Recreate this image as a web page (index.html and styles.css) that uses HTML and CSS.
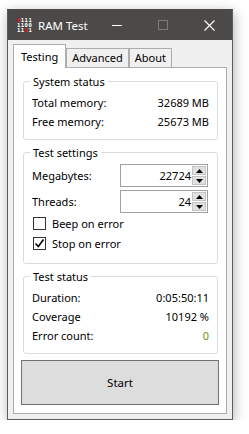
FILE: index.html
```html
<!DOCTYPE html>
<html>
<head>
  <title>RAM Test</title>
  <link rel="stylesheet" href="styles.css">
</head>
<body>
  <div class="window">
    <div class="titlebar">
      <svg class="app-icon" width="16" height="15" viewBox="0 0 16 15">
        <text><tspan class="red" x="0" y="4.4">0</tspan><tspan x="3.8 7.6 11.4" y="4.4">111</tspan><tspan x="0 3.8 7.6 11.4" y="9.4">1100</tspan><tspan x="0 3.8" y="14.4">11</tspan><tspan class="red" x="7.6" y="14.4">0</tspan><tspan x="11.4" y="14.4">1</tspan></text>
      </svg>
      <span class="title">RAM Test</span>
      <div class="caption-btns">
        <span class="cap-btn">
          <svg width="10" height="10" viewBox="0 0 10 10"><path d="M0 5.5h10" stroke="#fff" stroke-width="1"/></svg>
        </span>
        <span class="cap-btn">
          <svg width="10" height="10" viewBox="0 0 10 10"><rect x="0.5" y="0.5" width="9" height="9" fill="none" stroke="#7c7b79" stroke-width="1"/></svg>
        </span>
        <span class="cap-btn">
          <svg width="11" height="11" viewBox="0 0 11 11"><path d="M0.5 0.5l10 10M10.5 0.5l-10 10" stroke="#fff" stroke-width="1.1"/></svg>
        </span>
      </div>
    </div>

    <div class="client">
      <div class="tabs">
        <div class="tab selected">Testing</div>
        <div class="tab">Advanced</div>
        <div class="tab">About</div>
      </div>

      <div class="tab-page">
        <div class="group">
          <div class="group-title">System status</div>
          <div class="rows">
            <div class="row"><span>Total memory:</span><span>32689 MB</span></div>
            <div class="row"><span>Free memory:</span><span>25673 MB</span></div>
          </div>
        </div>

        <div class="group">
          <div class="group-title">Test settings</div>
          <div class="settings">
            <div class="num-row">
              <span>Megabytes:</span>
              <div class="numeric">
                <span class="num-value">22724</span>
                <div class="spinner">
                  <span class="spin"><svg width="7" height="4" viewBox="0 0 7 4"><path d="M3.5 0L7 4H0z"/></svg></span>
                  <span class="spin"><svg width="7" height="4" viewBox="0 0 7 4"><path d="M0 0h7L3.5 4z"/></svg></span>
                </div>
              </div>
            </div>
            <div class="num-row">
              <span>Threads:</span>
              <div class="numeric">
                <span class="num-value">24</span>
                <div class="spinner">
                  <span class="spin"><svg width="7" height="4" viewBox="0 0 7 4"><path d="M3.5 0L7 4H0z"/></svg></span>
                  <span class="spin"><svg width="7" height="4" viewBox="0 0 7 4"><path d="M0 0h7L3.5 4z"/></svg></span>
                </div>
              </div>
            </div>
            <div class="check-row">
              <span class="checkbox"></span>
              <span>Beep on error</span>
            </div>
            <div class="check-row">
              <span class="checkbox">
                <svg width="11" height="11" viewBox="0 0 11 11"><path d="M1.5 5.5l2.8 3 5.2-7" fill="none" stroke="#000" stroke-width="1.6"/></svg>
              </span>
              <span>Stop on error</span>
            </div>
          </div>
        </div>

        <div class="group">
          <div class="group-title">Test status</div>
          <div class="rows">
            <div class="row"><span>Duration:</span><span>0:05:50:11</span></div>
            <div class="row"><span>Coverage</span><span>10192 %</span></div>
            <div class="row"><span>Error count:</span><span class="ok">0</span></div>
          </div>
        </div>

        <button class="start-btn">Start</button>
      </div>
    </div>
  </div>
</body>
</html>
```

FILE: styles.css
```css
body {
  margin: 0;
  background-color: #fff;
  font-family: "Noto Sans", sans-serif;
  font-size: 11px;
  color: #000;
}

.window {
  box-sizing: border-box;
  width: 226px;
  height: 411px;
  margin: 9px 0 0 7px;
  border: 1px solid #5c5c5c;
  border-top-color: #4b4a48;
  background-color: #f0f0f0;
  box-shadow: 1px 3px 12px rgba(0, 0, 0, 0.3);
}

/* title bar */
.titlebar {
  display: flex;
  align-items: center;
  height: 30px;
  background-color: #4b4a48;
  color: #fff;
}

.app-icon {
  margin: 0 5px 0 9px;
}

.app-icon text {
  font-family: "DejaVu Sans Mono", monospace;
  font-size: 5.6px;
  font-weight: bold;
  fill: #fff;
}

.app-icon .red {
  fill: #e8161b;
}

.title {
  flex: 1;
  font-size: 11.5px;
}

.caption-btns {
  display: flex;
  height: 100%;
}

.cap-btn {
  display: flex;
  align-items: center;
  justify-content: center;
  width: 46px;
}

/* tabs */
.client {
  padding: 4px 5px 5px 5px;
}

.tabs {
  display: flex;
  align-items: flex-end;
  height: 23px;
}

.tab {
  box-sizing: border-box;
  height: 19px;
  padding: 0 5px;
  line-height: 18px;
  border: 1px solid #adadad;
  border-bottom: none;
  background-color: #f0f0f0;
}

.tab.selected {
  position: relative;
  z-index: 1;
  height: 24px;
  margin-bottom: -1px;
  padding: 0 7px;
  line-height: 24px;
  background-color: #fff;
}

.tab-page {
  box-sizing: border-box;
  height: 347px;
  padding: 13px 7px 7px 7px;
  border: 1px solid #adadad;
  background-color: #fff;
}

/* group boxes */
.group {
  margin: 0 1px 12px 2px;
  padding: 0 8px;
  border: 1px solid #dcdcdc;
  border-radius: 3px;
}

.group-title {
  width: fit-content;
  margin: -8px 0 0 -2px;
  padding: 0 3px;
  line-height: 15px;
  background-color: #fff;
}

.rows {
  padding: 4px 0 8px 0;
}

.row {
  display: flex;
  justify-content: space-between;
  line-height: 19px;
}

.ok {
  color: #6f9416;
}

.settings {
  padding: 4px 0 10px 0;
}

.num-row {
  display: flex;
  align-items: center;
  justify-content: space-between;
  height: 23px;
  margin-bottom: 3px;
}

.num-row:nth-child(2) {
  margin-bottom: 0;
}

.numeric {
  box-sizing: border-box;
  display: flex;
  align-items: center;
  width: 88px;
  height: 23px;
  margin-right: 1px;
  padding: 0 1px 0 4px;
  border: 1px solid #a0a0a0;
}

.num-value {
  flex: 1;
  text-align: right;
  padding-right: 1px;
}

.spinner {
  display: flex;
  flex-direction: column;
  gap: 1px;
}

.spin {
  display: flex;
  align-items: center;
  justify-content: center;
  width: 14px;
  height: 9px;
  background-color: #e1e1e1;
  border: 1px solid #c4c4c4;
  box-sizing: border-box;
}

.check-row {
  display: flex;
  align-items: center;
  height: 20px;
}

.checkbox {
  box-sizing: border-box;
  display: flex;
  align-items: center;
  justify-content: center;
  width: 13px;
  height: 13px;
  margin: 0 6px 0 1px;
  border: 1px solid #333;
  background-color: #fff;
}

.start-btn {
  display: block;
  width: 198px;
  height: 45px;
  margin-top: -6px;
  border: 1px solid #707070;
  background-color: #dddddd;
  font-family: "Noto Sans", sans-serif;
  font-size: 11.5px;
  color: #000;
}
```
